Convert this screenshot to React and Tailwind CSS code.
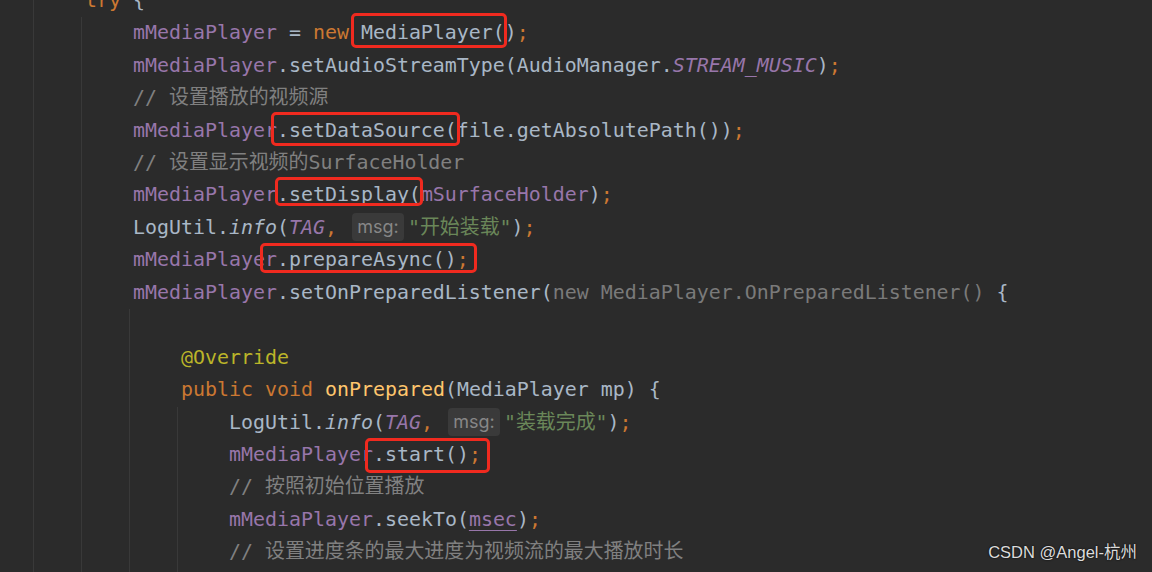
// Code editor screenshot: Darcula-style Java snippet with red highlight boxes
const C = {
  def: "text-[#a9b7c6]",
  field: "text-[#9876aa]",
  kw: "text-[#cc7832]",
  cmt: "text-[#808080]",
  str: "text-[#6a8759]",
  ann: "text-[#bbb529]",
  fn: "text-[#ffc66d]",
  dim: "text-[#7a7a7a]",
};

function Line({ children }) {
  return <div className="h-[32.44px] whitespace-pre pl-[4px]">{children}</div>;
}

function Block({ children }) {
  return <div className="border-l border-[#393939] pl-[47px]">{children}</div>;
}

function Hint() {
  return (
    <span className="ml-[3px] mr-[4px] inline-block h-[28px] w-[52px] rounded-[4px] bg-[#3a3a3a] text-center align-[1px] font-['Inter',sans-serif] text-[18px] leading-[28px] text-[#878787]">
      msg:
    </span>
  );
}

function Field({ children }) {
  return <span className={C.field}>{children}</span>;
}

function Semi() {
  return <span className={C.kw}>;</span>;
}

function LogLine({ text }) {
  return (
    <Line>
      LogUtil.<span className="italic">info</span>(
      <span className={`${C.field} italic`}>TAG</span>
      <span className={C.kw}>,</span> <Hint />
      <span className={C.str}>"{text}"</span>)<Semi />
    </Line>
  );
}

function RedBox({ className }) {
  return <div className={`absolute rounded-[5px] border-[3px] border-[#f02a1f] ${className}`} />;
}

export default function App() {
  return (
    <div className="relative h-[572px] w-[1152px] overflow-hidden bg-[#2b2b2b]">
      <div className="-mt-[15.2px] pl-[33px] font-['DejaVu_Sans_Mono','Noto_Sans_CJK_SC',monospace] text-[19.93px] leading-[32.44px] text-[#a9b7c6]">
        <Block>
          <Line>
            <span className={C.kw}>try</span> {"{"}
          </Line>
          <Block>
            <Line>
              <Field>mMediaPlayer</Field> = <span className={C.kw}>new</span> MediaPlayer()<Semi />
            </Line>
            <Line>
              <Field>mMediaPlayer</Field>.setAudioStreamType(AudioManager.
              <span className={`${C.field} italic`}>STREAM_MUSIC</span>)<Semi />
            </Line>
            <Line>
              <span className={C.cmt}>// 设置播放的视频源</span>
            </Line>
            <Line>
              <Field>mMediaPlayer</Field>.setDataSource(file.getAbsolutePath())<Semi />
            </Line>
            <Line>
              <span className={C.cmt}>// 设置显示视频的SurfaceHolder</span>
            </Line>
            <Line>
              <Field>mMediaPlayer</Field>.setDisplay(<Field>mSurfaceHolder</Field>)<Semi />
            </Line>
            <LogLine text="开始装载" />
            <Line>
              <Field>mMediaPlayer</Field>.prepareAsync()<Semi />
            </Line>
            <Line>
              <Field>mMediaPlayer</Field>.setOnPreparedListener(
              <span className={C.dim}>new MediaPlayer.OnPreparedListener() </span>
              {"{"}
            </Line>
            <Block>
              <Line> </Line>
              <Line>
                <span className={C.ann}>@Override</span>
              </Line>
              <Line>
                <span className={C.kw}>public void </span>
                <span className={C.fn}>onPrepared</span>(MediaPlayer mp) {"{"}
              </Line>
              <Block>
                <LogLine text="装载完成" />
                <Line>
                  <Field>mMediaPlayer</Field>.start()<Semi />
                </Line>
                <Line>
                  <span className={C.cmt}>// 按照初始位置播放</span>
                </Line>
                <Line>
                  <Field>mMediaPlayer</Field>.seekTo(
                  <span className={`${C.field} underline decoration-[#9876aa] underline-offset-[4px]`}>msec</span>)
                  <Semi />
                </Line>
                <Line>
                  <span className={C.cmt}>// 设置进度条的最大进度为视频流的最大播放时长</span>
                </Line>
                <Line> </Line>
              </Block>
            </Block>
          </Block>
        </Block>
      </div>

      {/* red annotation boxes */}
      <RedBox className="left-[351px] top-[13px] h-[35px] w-[156px]" />
      <RedBox className="left-[271px] top-[112px] h-[34px] w-[189px]" />
      <RedBox className="left-[275px] top-[177px] h-[29px] w-[148px]" />
      <RedBox className="left-[260px] top-[243px] h-[30px] w-[217px]" />
      <RedBox className="left-[365px] top-[438px] h-[35px] w-[125px]" />

      {/* watermark */}
      <div className="absolute bottom-[10px] right-[15px] font-['Liberation_Sans','Noto_Sans_CJK_SC',sans-serif] text-[16.5px] leading-[20px] text-[#dcdcdc] [text-shadow:0_0_2px_#000]">
        CSDN @Angel-杭州
      </div>
    </div>
  );
}
